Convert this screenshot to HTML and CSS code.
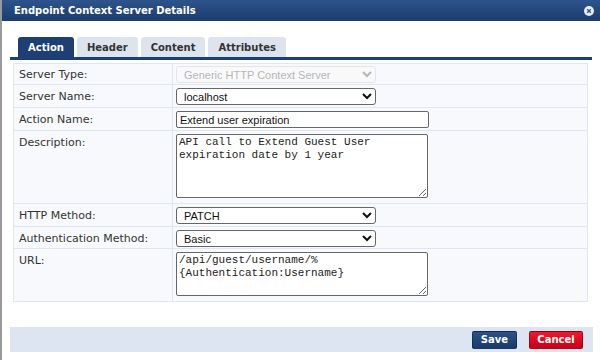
FILE: index.html
```html
<!DOCTYPE html>
<html lang="en">
<head>
    <meta charset="UTF-8">
    <title>Endpoint Context Server Details</title>
    <link rel="stylesheet" href="styles.css">
</head>
<body>
    <div class="dialog">
        <div class="title-bar">
            <span class="title">Endpoint Context Server Details</span>
            <span class="close-btn">
                <svg width="10" height="10" viewBox="0 0 10 10">
                    <circle cx="5" cy="5" r="5" fill="#e8ecf2"/>
                    <path d="M3.2 3.2 L6.8 6.8 M6.8 3.2 L3.2 6.8" stroke="#3a5580" stroke-width="1.4"/>
                </svg>
            </span>
        </div>

        <div class="body">
            <div class="tab-buttons">
                <button class="tab-button active">Action</button>
                <button class="tab-button">Header</button>
                <button class="tab-button">Content</button>
                <button class="tab-button">Attributes</button>
            </div>

            <table class="form-table">
                <tr class="row-first">
                    <td class="label">Server Type:</td>
                    <td class="value">
                        <select class="field-select" disabled>
                            <option>Generic HTTP Context Server</option>
                        </select>
                    </td>
                </tr>
                <tr>
                    <td class="label">Server Name:</td>
                    <td class="value">
                        <select class="field-select">
                            <option>localhost</option>
                        </select>
                    </td>
                </tr>
                <tr>
                    <td class="label">Action Name:</td>
                    <td class="value"><input type="text" class="field-text" value="Extend user expiration"></td>
                </tr>
                <tr>
                    <td class="label">Description:</td>
                    <td class="value tall"><textarea class="field-area desc">API call to Extend Guest User expiration date by 1 year</textarea></td>
                </tr>
                <tr>
                    <td class="label">HTTP Method:</td>
                    <td class="value">
                        <select class="field-select">
                            <option>PATCH</option>
                        </select>
                    </td>
                </tr>
                <tr class="row-short">
                    <td class="label">Authentication Method:</td>
                    <td class="value">
                        <select class="field-select">
                            <option>Basic</option>
                        </select>
                    </td>
                </tr>
                <tr>
                    <td class="label">URL:</td>
                    <td class="value tall"><textarea class="field-area url">/api/guest/username/%{Authentication:Username}</textarea></td>
                </tr>
            </table>
        </div>

        <div class="footer">
            <button class="btn btn-save">Save</button>
            <button class="btn btn-cancel">Cancel</button>
        </div>
    </div>
</body>
</html>
```

FILE: styles.css
```css
html, body {
    margin: 0;
    padding: 0;
    background-color: #fff;
}
body {
    font-family: "DejaVu Sans", Verdana, sans-serif;
    color: #333;
    width: 600px;
    height: 360px;
    overflow: hidden;
}
.dialog {
    border-left: 2px solid #9a9a9a;
    height: 360px;
    box-sizing: border-box;
}
.title-bar {
    height: 21px;
    background: linear-gradient(to bottom, #2e548c, #1a3b6e);
    display: flex;
    align-items: center;
    justify-content: space-between;
    padding: 0 6px 0 12px;
}
.title {
    color: #fff;
    font-weight: bold;
    font-size: 10px;
}
.close-btn {
    display: flex;
}
.body {
    padding: 16px 8px 0 8px;
}
.tab-buttons {
    display: flex;
    gap: 3px;
    padding-left: 8px;
    border-bottom: 3px solid #1d3f73;
}
.tab-button {
    font-family: "DejaVu Sans", Verdana, sans-serif;
    font-weight: bold;
    font-size: 10px;
    color: #333;
    background-color: #dde4ee;
    border: none;
    border-radius: 3px 3px 0 0;
    height: 20px;
    padding: 0 10px;
    cursor: pointer;
}
.tab-button.active {
    background-color: #1d3f73;
    color: #fff;
}
.form-table {
    border-collapse: collapse;
    margin: 3px 0 0 3px;
    width: 575px;
}
.form-table td {
    border: 1px solid #dfe6f1;
    background-color: #f7f9fc;
    vertical-align: top;
    font-size: 11px;
}
.form-table td.label {
    width: 148px;
    padding: 5px 5px 0 5px;
    color: #333;
}
.form-table td.value {
    padding: 3px 3px 2px 3px;
}
.form-table td.value.tall {
    padding: 3px 3px 5px 3px;
}
.row-first td.value {
    padding: 2px 3px 1px 3px;
}
.row-first td.label {
    padding-top: 4px;
}
.row-short td.value {
    padding: 3px 3px 1px 3px;
}
.field-select {
    display: block;
    width: 200px;
    height: 17px;
    font-family: "Liberation Sans", Arial, sans-serif;
    font-size: 11px;
    color: #111;
    background-color: #fff;
    border: 1px solid #666;
    border-radius: 3px;
    padding: 0 0 0 3px;
    margin: 0;
}
.field-select:disabled {
    color: #999;
    border-color: #ddd;
    background-color: #fafafa;
}
.field-text {
    display: block;
    width: 253px;
    height: 17px;
    box-sizing: border-box;
    font-family: "Liberation Sans", Arial, sans-serif;
    font-size: 11px;
    color: #111;
    border: 1px solid #666;
    border-radius: 2px;
    padding: 0 3px;
    margin: 0;
}
.field-area {
    display: block;
    width: 252px;
    box-sizing: border-box;
    font-family: "Liberation Mono", "Courier New", monospace;
    font-size: 11px;
    line-height: 13px;
    color: #222;
    border: 1px solid #666;
    border-radius: 2px;
    padding: 1px 2px;
    margin: 0;
}
.field-area.desc {
    height: 64px;
}
.field-area.url {
    height: 44px;
}
.footer {
    margin: 25px 7px 0 8px;
    height: 25px;
    background-color: #dde5f2;
    display: flex;
    align-items: center;
    justify-content: flex-end;
    gap: 12px;
    padding-right: 10px;
}
.btn {
    font-family: "DejaVu Sans", Verdana, sans-serif;
    font-weight: bold;
    font-size: 10px;
    color: #fff;
    border: 1px solid rgba(0, 0, 0, 0.3);
    border-radius: 2px;
    height: 18px;
    padding: 0;
    cursor: pointer;
}
.btn-save {
    width: 45px;
    background: linear-gradient(to bottom, #2c5088, #1a3a6b);
}
.btn-cancel {
    width: 54px;
    background: linear-gradient(to bottom, #ee1a2a, #c8001a);
}
```
